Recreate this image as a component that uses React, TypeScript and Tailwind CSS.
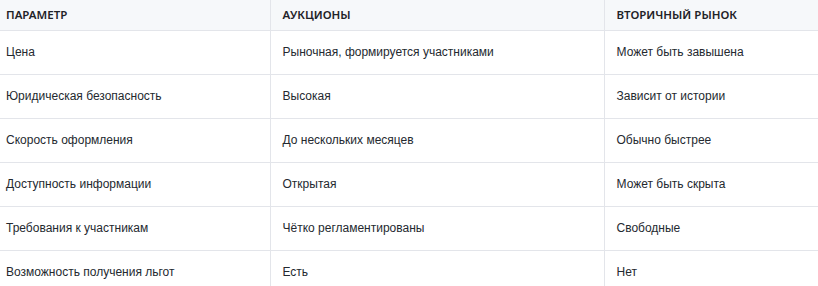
const rows = [
  ['Цена', 'Рыночная, формируется участниками', 'Может быть завышена'],
  ['Юридическая безопасность', 'Высокая', 'Зависит от истории'],
  ['Скорость оформления', 'До нескольких месяцев', 'Обычно быстрее'],
  ['Доступность информации', 'Открытая', 'Может быть скрыта'],
  ['Требования к участникам', 'Чётко регламентированы', 'Свободные'],
  ['Возможность получения льгот', 'Есть', 'Нет'],
];

const App = () => {
  return (
    <div className="w-[818px] h-[286px] overflow-hidden bg-white font-['Liberation_Sans',sans-serif] text-[12px] text-[#24292f]">
      <table className="w-[860px] border-collapse table-fixed">
        <colgroup>
          <col className="w-[270px]" />
          <col className="w-[334px]" />
          <col />
        </colgroup>
        <thead className="font-['Noto_Sans',sans-serif]">
          <tr className="h-[30px] bg-[#f6f8fa] border-b border-[#e3e5ea]">
            <th className="pl-[6px] pr-3 text-left font-semibold text-[11.5px] text-[#1f2328]">ПАРАМЕТР</th>
            <th className="px-3 text-left font-semibold text-[11.5px] text-[#1f2328] border-l border-[#e3e5ea]">АУКЦИОНЫ</th>
            <th className="px-3 text-left font-semibold text-[11.5px] text-[#1f2328] border-l border-[#e3e5ea]">ВТОРИЧНЫЙ РЫНОК</th>
          </tr>
        </thead>
        <tbody>
          {rows.map((r) => (
            <tr key={r[0]} className="h-[44px] border-b border-[#e3e5ea]">
              <td className="pl-[6px] pr-3">{r[0]}</td>
              <td className="px-3 border-l border-[#e3e5ea]">{r[1]}</td>
              <td className="px-3 border-l border-[#e3e5ea]">{r[2]}</td>
            </tr>
          ))}
        </tbody>
      </table>
    </div>
  );
};

export default App;
